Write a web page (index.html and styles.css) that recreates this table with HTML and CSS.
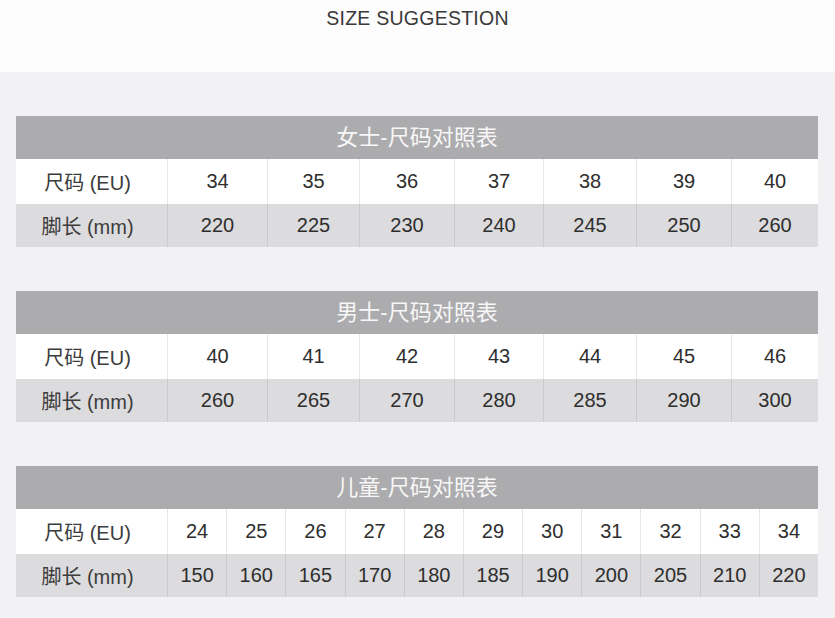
FILE: index.html
```html
<!DOCTYPE html>
<html lang="zh">
<head>
<meta charset="utf-8">
<title>SIZE SUGGESTION</title>
<link rel="stylesheet" href="styles.css">
</head>
<body>
<header class="top">
  <h1 class="title">SIZE SUGGESTION</h1>
</header>
<main class="panel">
  <section class="chart">
    <div class="chart-head">女士-尺码对照表</div>
    <div class="grid grid-adult">
      <div class="cell label row-a">尺码 (EU)</div>
      <div class="cell row-a">34</div><div class="cell row-a">35</div><div class="cell row-a">36</div><div class="cell row-a">37</div><div class="cell row-a">38</div><div class="cell row-a">39</div><div class="cell row-a">40</div>
      <div class="cell label row-b">脚长 (mm)</div>
      <div class="cell row-b">220</div><div class="cell row-b">225</div><div class="cell row-b">230</div><div class="cell row-b">240</div><div class="cell row-b">245</div><div class="cell row-b">250</div><div class="cell row-b">260</div>
    </div>
  </section>
  <section class="chart">
    <div class="chart-head">男士-尺码对照表</div>
    <div class="grid grid-adult">
      <div class="cell label row-a">尺码 (EU)</div>
      <div class="cell row-a">40</div><div class="cell row-a">41</div><div class="cell row-a">42</div><div class="cell row-a">43</div><div class="cell row-a">44</div><div class="cell row-a">45</div><div class="cell row-a">46</div>
      <div class="cell label row-b">脚长 (mm)</div>
      <div class="cell row-b">260</div><div class="cell row-b">265</div><div class="cell row-b">270</div><div class="cell row-b">280</div><div class="cell row-b">285</div><div class="cell row-b">290</div><div class="cell row-b">300</div>
    </div>
  </section>
  <section class="chart">
    <div class="chart-head">儿童-尺码对照表</div>
    <div class="grid grid-kids">
      <div class="cell label row-a">尺码 (EU)</div>
      <div class="cell row-a">24</div><div class="cell row-a">25</div><div class="cell row-a">26</div><div class="cell row-a">27</div><div class="cell row-a">28</div><div class="cell row-a">29</div><div class="cell row-a">30</div><div class="cell row-a">31</div><div class="cell row-a">32</div><div class="cell row-a">33</div><div class="cell row-a">34</div>
      <div class="cell label row-b">脚长 (mm)</div>
      <div class="cell row-b">150</div><div class="cell row-b">160</div><div class="cell row-b">165</div><div class="cell row-b">170</div><div class="cell row-b">180</div><div class="cell row-b">185</div><div class="cell row-b">190</div><div class="cell row-b">200</div><div class="cell row-b">205</div><div class="cell row-b">210</div><div class="cell row-b">220</div>
    </div>
  </section>
</main>
</body>
</html>
```
FILE: styles.css
```css
* { box-sizing: border-box; }

html, body {
  margin: 0;
  padding: 0;
}

body {
  width: 835px;
  height: 618px;
  overflow: hidden;
  background: #f2f2f4;
  font-family: "Liberation Sans", "Noto Sans CJK SC", sans-serif;
  color: #333;
}

.top {
  height: 72px;
  background: #fdfdfd;
  padding-top: 6px;
}

.title {
  margin: 0;
  text-align: center;
  font-weight: normal;
  font-size: 19.5px;
  line-height: 24px;
  letter-spacing: 0.25px;
  color: #3a3a3a;
}

.panel {
  padding: 44px 17px 0 16px;
  display: flex;
  flex-direction: column;
  gap: 44px;
}

.chart-head {
  height: 43px;
  background: #acabad;
  color: #f7f7f7;
  font-size: 22px;
  line-height: 43px;
  text-align: center;
}

.grid {
  display: grid;
  grid-template-rows: 45px 43px;
}

.grid-adult {
  grid-template-columns: 151px 100px 92px 95px 89px 93px 95px 87px;
}

.grid-kids {
  grid-template-columns: 151px repeat(11, 1fr);
}

.cell {
  display: flex;
  align-items: center;
  justify-content: center;
  font-size: 20px;
  color: #2e2e2e;
  border-left: 1px solid #e6e6e8;
}

.cell.label {
  border-left: none;
  padding-right: 8px;
  color: #3c3c3c;
}

.row-a {
  background: #ffffff;
}

.row-b {
  background: #dcdbdd;
  border-left-color: #cbcacc;
}
```
